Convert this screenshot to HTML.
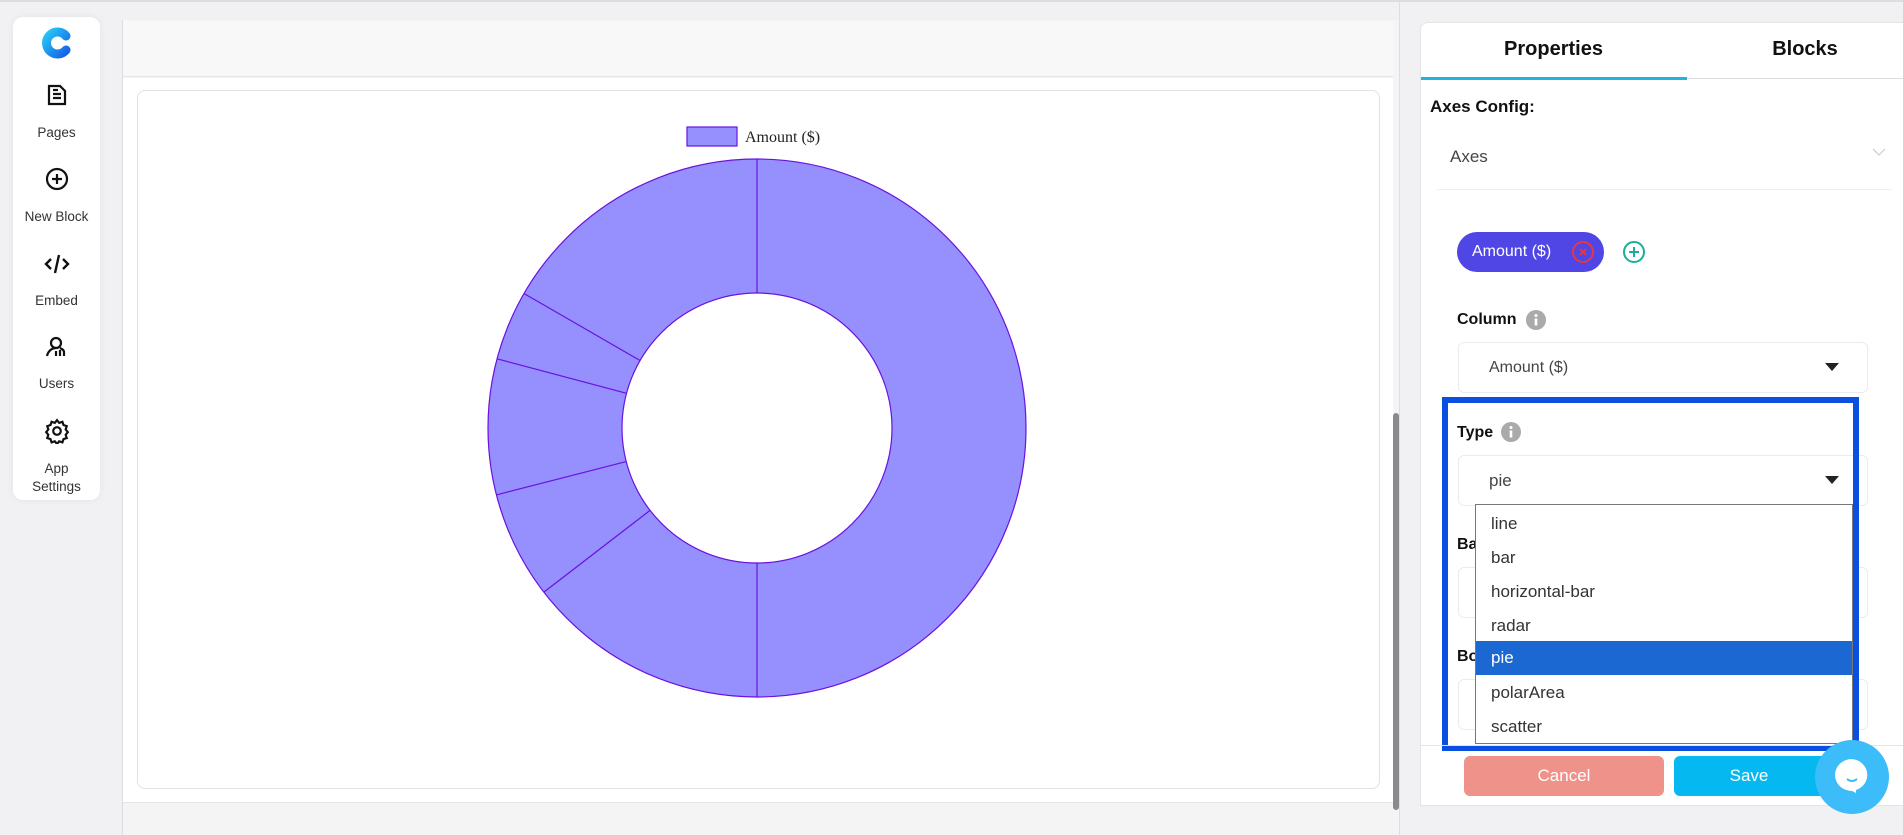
<!DOCTYPE html>
<html><head><meta charset="utf-8"><style>
*{box-sizing:border-box;margin:0;padding:0}
body{width:1903px;height:835px;background:#f1f1f3;font-family:"Liberation Sans",sans-serif;position:relative;overflow:hidden;color:#222}
.abs{position:absolute}
.side{left:13px;top:17px;width:87px;height:483px;background:#fff;border-radius:10px;box-shadow:0 0 8px rgba(0,0,0,.06)}
.si{position:absolute;left:0;width:87px;text-align:center;font-size:13.5px;color:#333}
.lbl{font-weight:bold;font-size:16px;color:#111}
.opt{position:absolute;left:0;width:100%;height:34px;line-height:34px;padding-left:15px;font-size:17px;color:#333}
</style></head><body>
<div class="abs" style="left:0;top:0;width:1903px;height:2px;background:#ddd"></div>
<!-- sidebar -->
<div class="abs side">
 <svg class="abs" style="left:28px;top:10px" width="30" height="32" viewBox="0 0 30 32"><defs><linearGradient id="g" x1="0" y1="0" x2="1" y2="1"><stop offset="0" stop-color="#27c6f5"/><stop offset="1" stop-color="#1565e8"/></linearGradient></defs><path d="M25 9 A11 11 0 1 0 25 23" fill="none" stroke="url(#g)" stroke-width="9" stroke-linecap="round"/></svg>
 <svg class="abs" style="left:33px;top:66px" width="22" height="24" viewBox="0 0 22 24" fill="none" stroke="#111" stroke-width="2.2"><path d="M3 3h11l5 5v13H3z"/><path d="M7 11h8M7 15h8M7 7h5"/></svg>
 <div class="si" style="top:108px">Pages</div>
 <svg class="abs" style="left:32px;top:150px" width="24" height="24" viewBox="0 0 24 24" fill="none" stroke="#111" stroke-width="2.2"><circle cx="12" cy="12" r="10"/><path d="M12 7v10M7 12h10"/></svg>
 <div class="si" style="top:192px">New Block</div>
 <svg class="abs" style="left:30px;top:236px" width="28" height="22" viewBox="0 0 28 22" fill="none" stroke="#111" stroke-width="2.4"><path d="M8 6l-5 5 5 5M20 6l5 5-5 5M16 2l-4 18"/></svg>
 <div class="si" style="top:276px">Embed</div>
 <svg class="abs" style="left:31px;top:318px" width="26" height="24" viewBox="0 0 26 24" fill="none" stroke="#111" stroke-width="2.2"><circle cx="12" cy="8" r="5"/><path d="M3 21c1-5 5-8 9-8M12 21v-5M16 21v-6M20 21v-4c0-2-2-3-4-4"/></svg>
 <div class="si" style="top:359px">Users</div>
 <svg class="abs" style="left:31px;top:401px" width="26" height="26" viewBox="0 0 24 24" fill="none" stroke="#111" stroke-width="2"><circle cx="12" cy="12" r="3.5"/><path d="M12 2l2 2.5 3-1 1 3 3 1-1 3 2 2.5-2 2.5 1 3-3 1-1 3-3-1-2 2.5-2-2.5-3 1-1-3-3-1 1-3-2-2.5 2-2.5-1-3 3-1 1-3 3 1z"/></svg>
 <div class="si" style="top:443px;line-height:18px">App<br>Settings</div>
</div>
<!-- canvas -->
<div class="abs" style="left:122px;top:20px;width:1277px;height:815px;background:#f4f4f5;border-left:1px solid #ddd"></div>
<div class="abs" style="left:123px;top:21px;width:1270px;height:56px;background:#f8f8f9;border-bottom:1px solid #e6e6e6"></div>
<div class="abs" style="left:123px;top:78px;width:1270px;height:725px;background:#fff;border-bottom:1px solid #e6e6e6"></div>
<div class="abs" style="left:137px;top:90px;width:1243px;height:699px;border:1px solid #e2e2e2;border-radius:8px;background:#fff"></div>
<div class="abs" style="left:1393px;top:413px;width:6px;height:397px;background:#8a8a8a;border-radius:3px"></div>
<div class="abs" style="left:1399px;top:0;width:1px;height:835px;background:#ddd"></div>
<svg class="abs" style="left:0;top:0" width="1400" height="835">
 <rect x="687" y="127" width="50" height="19" fill="#9690fe" stroke="#6a12e0" stroke-width="1.2"/>
 <text x="745" y="142" font-family="Liberation Serif" font-size="16" fill="#222">Amount ($)</text>
 <circle cx="757" cy="428" r="269" fill="#9690fe" stroke="#6a12e0" stroke-width="1.2"/>
 <circle cx="757" cy="428" r="135" fill="#fff" stroke="#6a12e0" stroke-width="1.2"/>
 <g stroke="#6a12e0" stroke-width="1.2">
 <line x1="757" y1="159" x2="757" y2="293"/><line x1="757" y1="697" x2="757" y2="563"/>
 <line x1="543.9" y1="592.1" x2="650" y2="510.4"/><line x1="496.4" y1="494.9" x2="626.2" y2="461.6"/>
 <line x1="497" y1="358.8" x2="626.5" y2="393.3"/><line x1="524" y1="293.5" x2="640.1" y2="360.5"/>
 </g>
</svg>
<!-- right panel -->
<div class="abs" style="left:1420px;top:22px;width:483px;height:784px;background:#fff;border-radius:8px 0 0 0;border:1px solid #e4e4e4;border-right:none"></div>
<div class="abs" style="left:1420px;top:38px;width:267px;text-align:center;font-size:20px;font-weight:bold;color:#111">Properties</div>
<div class="abs" style="left:1687px;top:38px;width:236px;text-align:center;font-size:20px;font-weight:bold;color:#111">Blocks</div>
<div class="abs" style="left:1421px;top:78px;width:482px;height:1px;background:#ddd"></div>
<div class="abs" style="left:1421px;top:77px;width:266px;height:3px;background:#1fb3e0"></div>
<div class="abs lbl" style="left:1430px;top:97px;font-size:17px">Axes Config:</div>
<div class="abs" style="left:1450px;top:147px;font-size:17px;color:#444">Axes</div>
<svg class="abs" style="left:1872px;top:148px" width="14" height="9"><path d="M1 1l6 6 6-6" fill="none" stroke="#ccc" stroke-width="1.2"/></svg>
<div class="abs" style="left:1437px;top:189px;width:455px;height:1px;background:#f0f0f0"></div>
<div class="abs" style="left:1457px;top:232px;width:147px;height:40px;background:#4f46e5;border-radius:20px;color:#fff;font-size:16px;line-height:40px;padding-left:15px">Amount ($)</div>
<svg class="abs" style="left:1571px;top:240px" width="24" height="24"><circle cx="12" cy="12" r="10" fill="none" stroke="#e5373f" stroke-width="2"/><path d="M9 9l6 6M15 9l-6 6" stroke="#e5373f" stroke-width="2"/></svg>
<svg class="abs" style="left:1622px;top:240px" width="24" height="24"><circle cx="12" cy="12" r="10" fill="none" stroke="#19b098" stroke-width="2"/><path d="M12 7v10M7 12h10" stroke="#19b098" stroke-width="2"/></svg>
<div class="abs lbl" style="left:1457px;top:311px">Column</div>
<svg class="abs" style="left:1526px;top:310px" width="20" height="20"><circle cx="10" cy="10" r="10" fill="#aaa"/><rect x="8.7" y="8.5" width="2.6" height="7" fill="#fff"/><circle cx="10" cy="5.5" r="1.5" fill="#fff"/></svg>
<div class="abs" style="left:1458px;top:342px;width:410px;height:51px;border:1px solid #ebebeb;border-radius:6px;font-size:16px;color:#444;line-height:49px;padding-left:30px">Amount ($)</div>
<svg class="abs" style="left:1825px;top:363px" width="14" height="8"><path d="M0 0h14L7 8z" fill="#222"/></svg>
<div class="abs lbl" style="left:1457px;top:424px">Type</div>
<svg class="abs" style="left:1501px;top:422px" width="20" height="20"><circle cx="10" cy="10" r="10" fill="#aaa"/><rect x="8.7" y="8.5" width="2.6" height="7" fill="#fff"/><circle cx="10" cy="5.5" r="1.5" fill="#fff"/></svg>
<div class="abs" style="left:1458px;top:455px;width:410px;height:51px;border:1px solid #ebebeb;border-radius:6px;font-size:17px;color:#444;line-height:49px;padding-left:30px">pie</div>
<svg class="abs" style="left:1825px;top:476px" width="14" height="8"><path d="M0 0h14L7 8z" fill="#222"/></svg>
<div class="abs lbl" style="left:1457px;top:536px">Ba</div>
<div class="abs" style="left:1458px;top:567px;width:410px;height:51px;border:1px solid #ebebeb;border-radius:6px"></div>
<div class="abs lbl" style="left:1457px;top:648px">Bo</div>
<div class="abs" style="left:1458px;top:679px;width:410px;height:51px;border:1px solid #ebebeb;border-radius:6px"></div>
<div class="abs" style="left:1475px;top:504px;width:378px;height:240px;background:#fff;border:1px solid #777">
 <div class="opt" style="top:2px">line</div>
 <div class="opt" style="top:36px">bar</div>
 <div class="opt" style="top:70px">horizontal-bar</div>
 <div class="opt" style="top:104px">radar</div>
 <div class="opt" style="top:136px;background:#1c68d2;color:#fff">pie</div>
 <div class="opt" style="top:171px">polarArea</div>
 <div class="opt" style="top:205px">scatter</div>
</div>
<div class="abs" style="left:1442px;top:397px;width:417px;height:354px;border:6px solid #0a4fe0"></div>
<div class="abs" style="left:1421px;top:745px;width:482px;height:1px;background:#e4e4e4"></div>
<div class="abs" style="left:1464px;top:756px;width:200px;height:40px;background:#ee928a;border-radius:6px;color:#fff;text-align:center;line-height:40px;font-size:17px">Cancel</div>
<div class="abs" style="left:1674px;top:756px;width:200px;height:40px;background:#05b9f0;border-radius:6px;color:#fff;text-align:center;line-height:40px;font-size:17px;padding-right:50px">Save</div>
<div class="abs" style="left:1815px;top:740px;width:74px;height:74px;border-radius:50%;background:#3cbcf8"></div>
<svg class="abs" style="left:1834px;top:758px" width="36" height="36"><path d="M18 1a17 16 0 1 0 0 32l4 2v-3a17 16 0 0 0-4-31z" fill="#fff"/><path d="M13 21q5 4 10 0" fill="none" stroke="#3cbcf8" stroke-width="2"/></svg>
</body></html>
